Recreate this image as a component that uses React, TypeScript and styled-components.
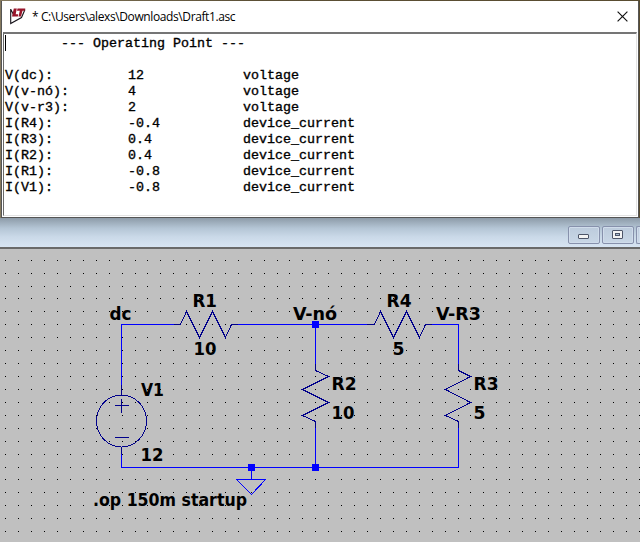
import React from "react";
import styled, { createGlobalStyle } from "styled-components";

const GlobalStyle = createGlobalStyle`
  body { margin: 0; background: #c0c0c0; }
`;

const Screen = styled.div`
  width: 640px;
  height: 542px;
  overflow: hidden;
  display: flex;
  flex-direction: column;
  color: #000;
`;

const Desktop = styled.div`
  box-sizing: border-box;
  height: 218px;
  padding: 1px 1px 0;
  background: linear-gradient(90deg, #85795e, #5b4f35 40%, #594c30);
`;

const ReportWindow = styled.section`
  box-sizing: border-box;
  height: 217px;
  display: flex;
  flex-direction: column;
  border: 1px solid #555;
  border-top: 0;
  background: #fff;
`;

const TitleBar = styled.header`
  height: 31px;
  flex: none;
  display: flex;
  align-items: center;
  padding: 0 10px 0 7px;
`;

const Title = styled.h1`
  margin: 0 auto 0 5px;
  font: 400 12px/16px "Open Sans", "Noto Sans", sans-serif;
  letter-spacing: -0.39px;
  white-space: pre;
`;

const Report = styled.main`
  box-sizing: border-box;
  flex: 1;
  margin: 0 1px 1px;
  padding: 2px 0 0 1px;
  border: 1px solid #e3e3e3;
  border-top: 2px solid #757575;
  border-left-color: #696969;
  font: 400 13.333px/16px "Liberation Mono", monospace;
  -webkit-text-stroke: 0.35px #000;
`;

const Heading = styled.h2`
  margin: 0 0 16px;
  height: 16px;
  display: flex;
  gap: 55px;
  font: inherit;
  white-space: pre;
`;

const Caret = styled.span`
  width: 1px;
  height: 16px;
  margin-top: -1px;
  background: #000;
`;

const Row = styled.div`
  display: grid;
  grid-template-columns: 123px 115px auto;
  height: 16px;
`;

const MdiBar = styled.div`
  box-sizing: border-box;
  height: 31px;
  flex: none;
  display: flex;
  justify-content: flex-end;
  gap: 2px;
  padding-top: 8px;
  overflow: hidden;
  border-bottom: 2px solid #696969;
  background: linear-gradient(#8d9ba8, #b4c5d5 35%, #cad9e8 65%, #d7e4f2);
`;

const MdiButton = styled.button<{ $clipped?: boolean }>`
  box-sizing: border-box;
  width: ${(p) => (p.$clipped ? 4 : 32)}px;
  height: 18px;
  flex: none;
  display: flex;
  align-items: center;
  justify-content: center;
  padding: 0;
  border: 1px solid #8791ac;
  ${(p) => (p.$clipped ? "border-right: 0; border-radius: 2px 0 0 2px;" : "border-radius: 2px;")}
  background: linear-gradient(#bccbdc, #c9d7e6);
  box-shadow: inset 0 0 0 1px #d0dceb;
`;

const Glyph = styled.svg<{ $drop?: number }>`
  display: block;
  flex: none;
  margin-top: ${(p) => p.$drop ?? 0}px;
`;

const Canvas = styled.svg`
  display: block;
  flex: none;
  background: #c0c0c0;
`;

const Label = styled.text`
  font: 700 17.5px "DejaVu Sans Condensed", "DejaVu Sans", sans-serif;
  fill: #000;
`;

const readings = [
  ["V(dc):", "12", "voltage"],
  ["V(v-nó):", "4", "voltage"],
  ["V(v-r3):", "2", "voltage"],
  ["I(R4):", "-0.4", "device_current"],
  ["I(R3):", "0.4", "device_current"],
  ["I(R2):", "0.4", "device_current"],
  ["I(R1):", "-0.8", "device_current"],
  ["I(V1):", "-0.8", "device_current"],
];

// Grid pitch is slightly below 13px, so a few columns and rows close up by one.
const gridX = Array.from({ length: 50 }, (_, i) => 5 + 13 * i - (i > 10 ? 1 : 0) - (i > 21 ? 1 : 0) - (i > 35 ? 1 : 0));
const gridY = Array.from({ length: 22 }, (_, i) => 260 + 13 * i - (i > 2 ? 1 : 0) - (i > 16 ? 1 : 0));
const dots = gridY.map((y) => gridX.map((x) => `M${x} ${y}h1v1h-1z`).join("")).join("");

// text, x, baseline, width
const labels: [string, number, number, number][] = [
  ["dc", 109.5, 320, 22],
  ["R1", 192.5, 307, 24.5],
  ["10", 193.5, 355, 23],
  ["V-nó", 293, 320, 44],
  ["R4", 386.5, 307, 25],
  ["5", 392.5, 355, 12],
  ["V-R3", 436, 320, 45],
  ["R2", 331.5, 390, 25],
  ["10", 331.5, 419, 23],
  ["R3", 473.5, 390, 25],
  ["5", 473.5, 419, 12],
  ["V1", 141, 396, 23],
  ["12", 140.5, 461, 23],
  [".op 150m startup", 93, 506, 154],
];

const LogoIcon = () => (
  <Glyph width="18" height="18" viewBox="0 0 18 18">
    <path d="M1.7 .9v14.7L12.5 9.5 16 1.5M1.7 1.2l3.5 6.8" fill="none" stroke="#17131a" strokeWidth="1.1" />
    <path d="M4.8 .6h3L6.7 6.2h2.5L8.8 8.6H3zM8.5 .5h7.8l-.5 2.2h-2.3L12 8.4H9.5l1.3-5.6H8z" fill="#98152a" />
  </Glyph>
);

const CloseIcon = () => (
  <Glyph width="11" height="11" viewBox="0 0 11 11">
    <path d="M.6.6l9.8 9.8M10.4.6L.6 10.4" stroke="#111" strokeWidth="1.15" />
  </Glyph>
);

const MinimizeIcon = () => (
  <Glyph width="12" height="6" viewBox="0 0 12 6" $drop={4}>
    <rect x=".5" y=".5" width="10" height="4" rx=".5" fill="#f3f3f3" stroke="#4d5568" />
  </Glyph>
);

const RestoreIcon = () => (
  <Glyph width="12" height="10" viewBox="0 0 12 10">
    <rect x=".5" y=".5" width="10" height="8" rx=".5" fill="#f3f3f3" stroke="#4d5568" />
    <rect x="3.5" y="3.5" width="4" height="2" fill="#a9bdd2" stroke="#4d5568" />
  </Glyph>
);

const Schematic = () => (
  <Canvas width="640" height="293" viewBox="0 249 640 293">
    <path d={dots} fill="#000" shapeRendering="crispEdges" />
    <g fill="none" stroke="#0000ff" shapeRendering="crispEdges">
      <path d="M121.5 385V324.5H174M238 324.5H367M432 324.5H458.5V364M315.5 324V364M315.5 428V467M458.5 428V467.5H121.5V454M251.5 467V479.5" />
      <path d="M236.5 479.5H265.5L251.5 494.5Z" />
    </g>
    <g fill="none" stroke="#00008b" shapeRendering="crispEdges">
      <path d="M174 324.5H180.5L186.5 311.5L199.5 337.5L212.5 311.5L225.5 337.5L231.5 324.5H238" />
      <path d="M367 324.5H374.5L380.5 311.5L393.5 337.5L406.5 311.5L419.5 337.5L425.5 324.5H432" />
      <path d="M315.5 364V370.5L328.5 376.5L302.5 389.5L328.5 402.5L302.5 415.5L315.5 421.5V428" />
      <path d="M458.5 364V370.5L470.5 376.5L445.5 389.5L470.5 402.5L445.5 415.5L458.5 421.5V428" />
      <path d="M121.5 385V395M121.5 447V454M115 405.5H129M121.5 399V413M115 437.5H129" />
      <ellipse cx="121.5" cy="421" rx="25" ry="26" />
    </g>
    <path d="M312 321h7v7h-7zM312 464h7v7h-7zM248 464h7v7h-7z" fill="#00f" />
    {labels.map(([text, x, y, width]) => (
      <Label key={`${text}-${x}-${y}`} x={x} y={y} textLength={width} lengthAdjust="spacingAndGlyphs">
        {text}
      </Label>
    ))}
  </Canvas>
);

export default function App() {
  return (
    <Screen>
      <GlobalStyle />
      <Desktop>
        <ReportWindow>
          <TitleBar>
            <LogoIcon />
            <Title>* C:\Users\alexs\Downloads\Draft1.asc</Title>
            <CloseIcon />
          </TitleBar>
          <Report>
            <Heading>
              <Caret />
              --- Operating Point ---
            </Heading>
            {readings.map(([name, value, kind]) => (
              <Row key={name}>
                <span>{name}</span>
                <span>{value}</span>
                <span>{kind}</span>
              </Row>
            ))}
          </Report>
        </ReportWindow>
      </Desktop>
      <MdiBar>
        <MdiButton><MinimizeIcon /></MdiButton>
        <MdiButton><RestoreIcon /></MdiButton>
        <MdiButton $clipped />
      </MdiBar>
      <Schematic />
    </Screen>
  );
}
